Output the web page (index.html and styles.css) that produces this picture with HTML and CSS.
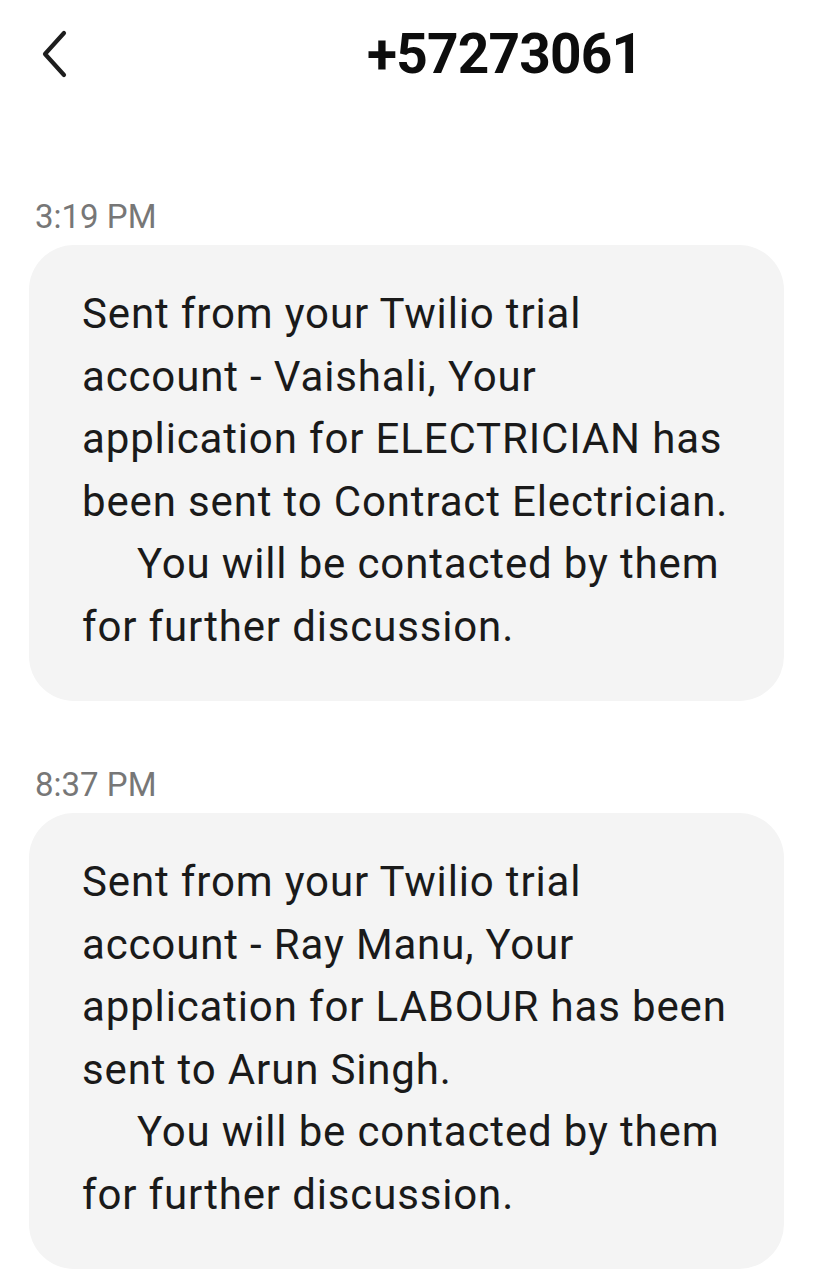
FILE: index.html
```html
<!DOCTYPE html>
<html>
<head>
<meta charset="utf-8">
<link rel="stylesheet" href="styles.css">
</head>
<body>
<header class="header">
  <svg class="back" width="30" height="50" viewBox="0 0 30 50" aria-hidden="true">
    <path d="M25 4 L6 25 L25 46" fill="none" stroke="#1e1e1e" stroke-width="4.2" stroke-linecap="round" stroke-linejoin="round"/>
  </svg>
  <h1 class="title">+57273061</h1>
</header>
<main class="thread">
  <div class="time">3:19 PM</div>
  <div class="bubble">
    <p class="msg">Sent from your Twilio trial<br>account - Vaishali, Your<br>application for ELECTRICIAN has<br>been sent to Contract Electrician.</p>
    <p class="msg indent">You will be contacted by them</p>
    <p class="msg">for further discussion.</p>
  </div>
  <div class="time">8:37 PM</div>
  <div class="bubble">
    <p class="msg">Sent from your Twilio trial<br>account - Ray Manu, Your<br>application for LABOUR has been<br>sent to Arun Singh.</p>
    <p class="msg indent">You will be contacted by them</p>
    <p class="msg">for further discussion.</p>
  </div>
</main>
</body>
</html>
```
FILE: styles.css
```css
html, body {
  margin: 0;
  padding: 0;
  background: #ffffff;
}
body {
  font-family: Roboto, "Noto Sans", sans-serif;
  color: #1a1a1a;
  width: 830px;
  overflow: hidden;
}
.header {
  height: 108px;
  display: flex;
  align-items: center;
  padding-left: 39px;
}
.back {
  display: block;
  flex: none;
}
.title {
  margin: 0 0 0 298px;
  font-size: 55px;
  font-weight: 700;
  color: #0d0d0d;
  line-height: 1;
  letter-spacing: -0.8px;
}
.thread {
  padding: 0 46px 0 29px;
}
.time {
  font-size: 33px;
  line-height: 40px;
  color: #777777;
  margin: 64px 0 8px 6px;
}
.header + .thread .time:first-child {
  margin-top: 89px;
}
.bubble {
  background: #f4f4f4;
  border-radius: 45px;
  padding: 38px 30px 43px 53px;
}
.msg {
  margin: 0;
  font-size: 42px;
  line-height: 62.5px;
  letter-spacing: 0.85px;
  color: #1a1a1a;
  white-space: nowrap;
}
.indent {
  text-indent: 55px;
}
```
